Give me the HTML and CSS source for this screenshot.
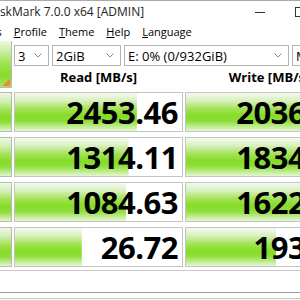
FILE: index.html
```html
<!DOCTYPE html>
<html lang="en">
<head>
  <meta charset="UTF-8">
  <title>CrystalDiskMark</title>
  <link rel="stylesheet" href="styles.css">
</head>
<body>

  <div class="window">
    <div class="titlebar">
      <span class="title">CrystalDiskMark 7.0.0 x64 [ADMIN]</span>
      <span class="win-btn">
        <svg width="12" height="12" viewBox="0 0 12 12"><line x1="1" y1="6.5" x2="11" y2="6.5" stroke="#333" stroke-width="1"/></svg>
      </span>
      <span class="win-btn">
        <svg width="12" height="12" viewBox="0 0 12 12"><rect x="1.5" y="1.5" width="9" height="9" fill="none" stroke="#333" stroke-width="1"/></svg>
      </span>
      <span class="win-btn">
        <svg width="12" height="12" viewBox="0 0 12 12"><path d="M1.5 1.5 L10.5 10.5 M10.5 1.5 L1.5 10.5" stroke="#333" stroke-width="1"/></svg>
      </span>
    </div>

    <div class="menubar">
      <span class="menu-item first">Settings</span>
      <span class="menu-item"><u>P</u>rofile</span>
      <span class="menu-item"><u>T</u>heme</span>
      <span class="menu-item"><u>H</u>elp</span>
      <span class="menu-item"><u>L</u>anguage</span>
    </div>

    <div class="top">
      <div class="tile-btn all-btn"></div>
      <div class="controls">
        <div class="select sel-count"><span>3</span><svg class="chev" width="8" height="5" viewBox="0 0 8 5"><polyline points="0.5,0.5 4,4 7.5,0.5" fill="none" stroke="#888" stroke-width="1"/></svg></div>
        <div class="select sel-size"><span>2GiB</span><svg class="chev" width="8" height="5" viewBox="0 0 8 5"><polyline points="0.5,0.5 4,4 7.5,0.5" fill="none" stroke="#888" stroke-width="1"/></svg></div>
        <div class="select sel-drive"><span>E: 0% (0/932GiB)</span><svg class="chev" width="8" height="5" viewBox="0 0 8 5"><polyline points="0.5,0.5 4,4 7.5,0.5" fill="none" stroke="#888" stroke-width="1"/></svg></div>
        <div class="select sel-unit"><span>MB/s</span></div>
      </div>
      <div class="col-head">Read [MB/s]</div>
      <div class="col-head">Write [MB/s]</div>
    </div>

    <div class="results">
      <div class="tile-btn"></div>
      <div class="tile value" style="background-size: 73% 100%">2453.46</div>
      <div class="tile value" style="background-size: 71.6% 100%">2036.75</div>

      <div class="tile-btn"></div>
      <div class="tile value" style="background-size: 68% 100%">1314.11</div>
      <div class="tile value" style="background-size: 70.8% 100%">1834.52</div>

      <div class="tile-btn"></div>
      <div class="tile value" style="background-size: 66.5% 100%">1084.63</div>
      <div class="tile value" style="background-size: 69.9% 100%">1622.37</div>

      <div class="tile-btn"></div>
      <div class="tile value" style="background-size: 40% 100%">26.72</div>
      <div class="tile value" style="background-size: 54.4% 100%">193.85</div>
    </div>

    <div class="comment"></div>
    <div class="statusbar"></div>
  </div>

</body>
</html>
```

FILE: styles.css
```css
body {
  margin: 0;
  background-color: #fff;
  font-family: 'Open Sans', 'Noto Sans', sans-serif;
  color: #000;
  overflow: hidden;
}
.window {
  width: 360px;
  border-top: 1px solid #aaa;
}
.titlebar {
  height: 21px;
  display: flex;
  align-items: center;
  font-size: 12px;
}
.title {
  margin-left: -50px;
  flex: 1;
  color: #222;
  white-space: nowrap;
}
.win-btn {
  width: 40px;
  display: flex;
  justify-content: center;
  flex: none;
}
.menubar {
  height: 18px;
  display: flex;
  align-items: center;
  font-size: 11px;
  gap: 12px;
}
.menu-item.first {
  margin-left: -39px;
}
.top {
  display: grid;
  grid-template-columns: 12px 169px 168px;
  grid-template-rows: 25px 22px;
  column-gap: 2px;
  margin-top: 1px;
}
.tile-btn {
  border-right: 1px solid #b8b8b8;
  border-bottom: 1px solid #b8b8b8;
  border-top: 1px solid #b8b8b8;
  background: linear-gradient(#eef8e4 0%, #d2efb4 22%, #9fe250 45%, #86dc28 62%, #8ede3a 76%, #c4ee98 92%, #e4f6d0 100%);
}
.all-btn {
  grid-row: 1 / span 2;
  border-top: none;
  background:
    linear-gradient(135deg, transparent 50%, #ee8a2c 50%) right 1px bottom 1px / 7px 7px no-repeat,
    linear-gradient(#eef8e4 0%, #c6ec9c 25%, #9fe250 50%, #86dc28 75%, #a8e466 100%);
}
.controls {
  grid-column: 2 / span 2;
  display: flex;
  gap: 3px;
  padding-top: 4px;
}
.select {
  height: 19px;
  border: 1px solid #b4b4b4;
  display: flex;
  align-items: center;
  justify-content: space-between;
  padding: 0 6px 0 3px;
  font-size: 13px;
  background-color: #fff;
  flex: none;
}
.sel-count { width: 24px; }
.sel-size { width: 58px; }
.sel-drive { width: 154px; }
.sel-unit { width: 60px; }
.chev {
  flex: none;
}
.col-head {
  text-align: center;
  font-weight: bold;
  font-size: 13px;
  line-height: 20px;
  padding-top: 1px;
}
.results {
  display: grid;
  grid-template-columns: 12px 169px 168px;
  grid-auto-rows: 40px;
  gap: 5px 2px;
  margin-top: 4px;
}
.tile {
  border: 1px solid #c4c4c4;
  background-color: #fff;
  background-image: linear-gradient(#f4faee 0%, #d9f0c0 20%, #a2e356 42%, #86dc28 60%, #8ede3a 74%, #c4ee98 90%, #e6f6d4 100%);
  background-repeat: no-repeat;
  background-position: left top;
}
.value {
  text-align: right;
  font-weight: bold;
  font-size: 31px;
  line-height: 38px;
  padding-right: 4px;
  letter-spacing: -0.5px;
}
.comment {
  margin-top: 3px;
  height: 21px;
  border-top: 1px solid #c8c8c8;
  border-bottom: 1px solid #9a9a9a;
}
.statusbar {
  height: 5px;
  border-bottom: 1px solid #c8c8c8;
}
```
